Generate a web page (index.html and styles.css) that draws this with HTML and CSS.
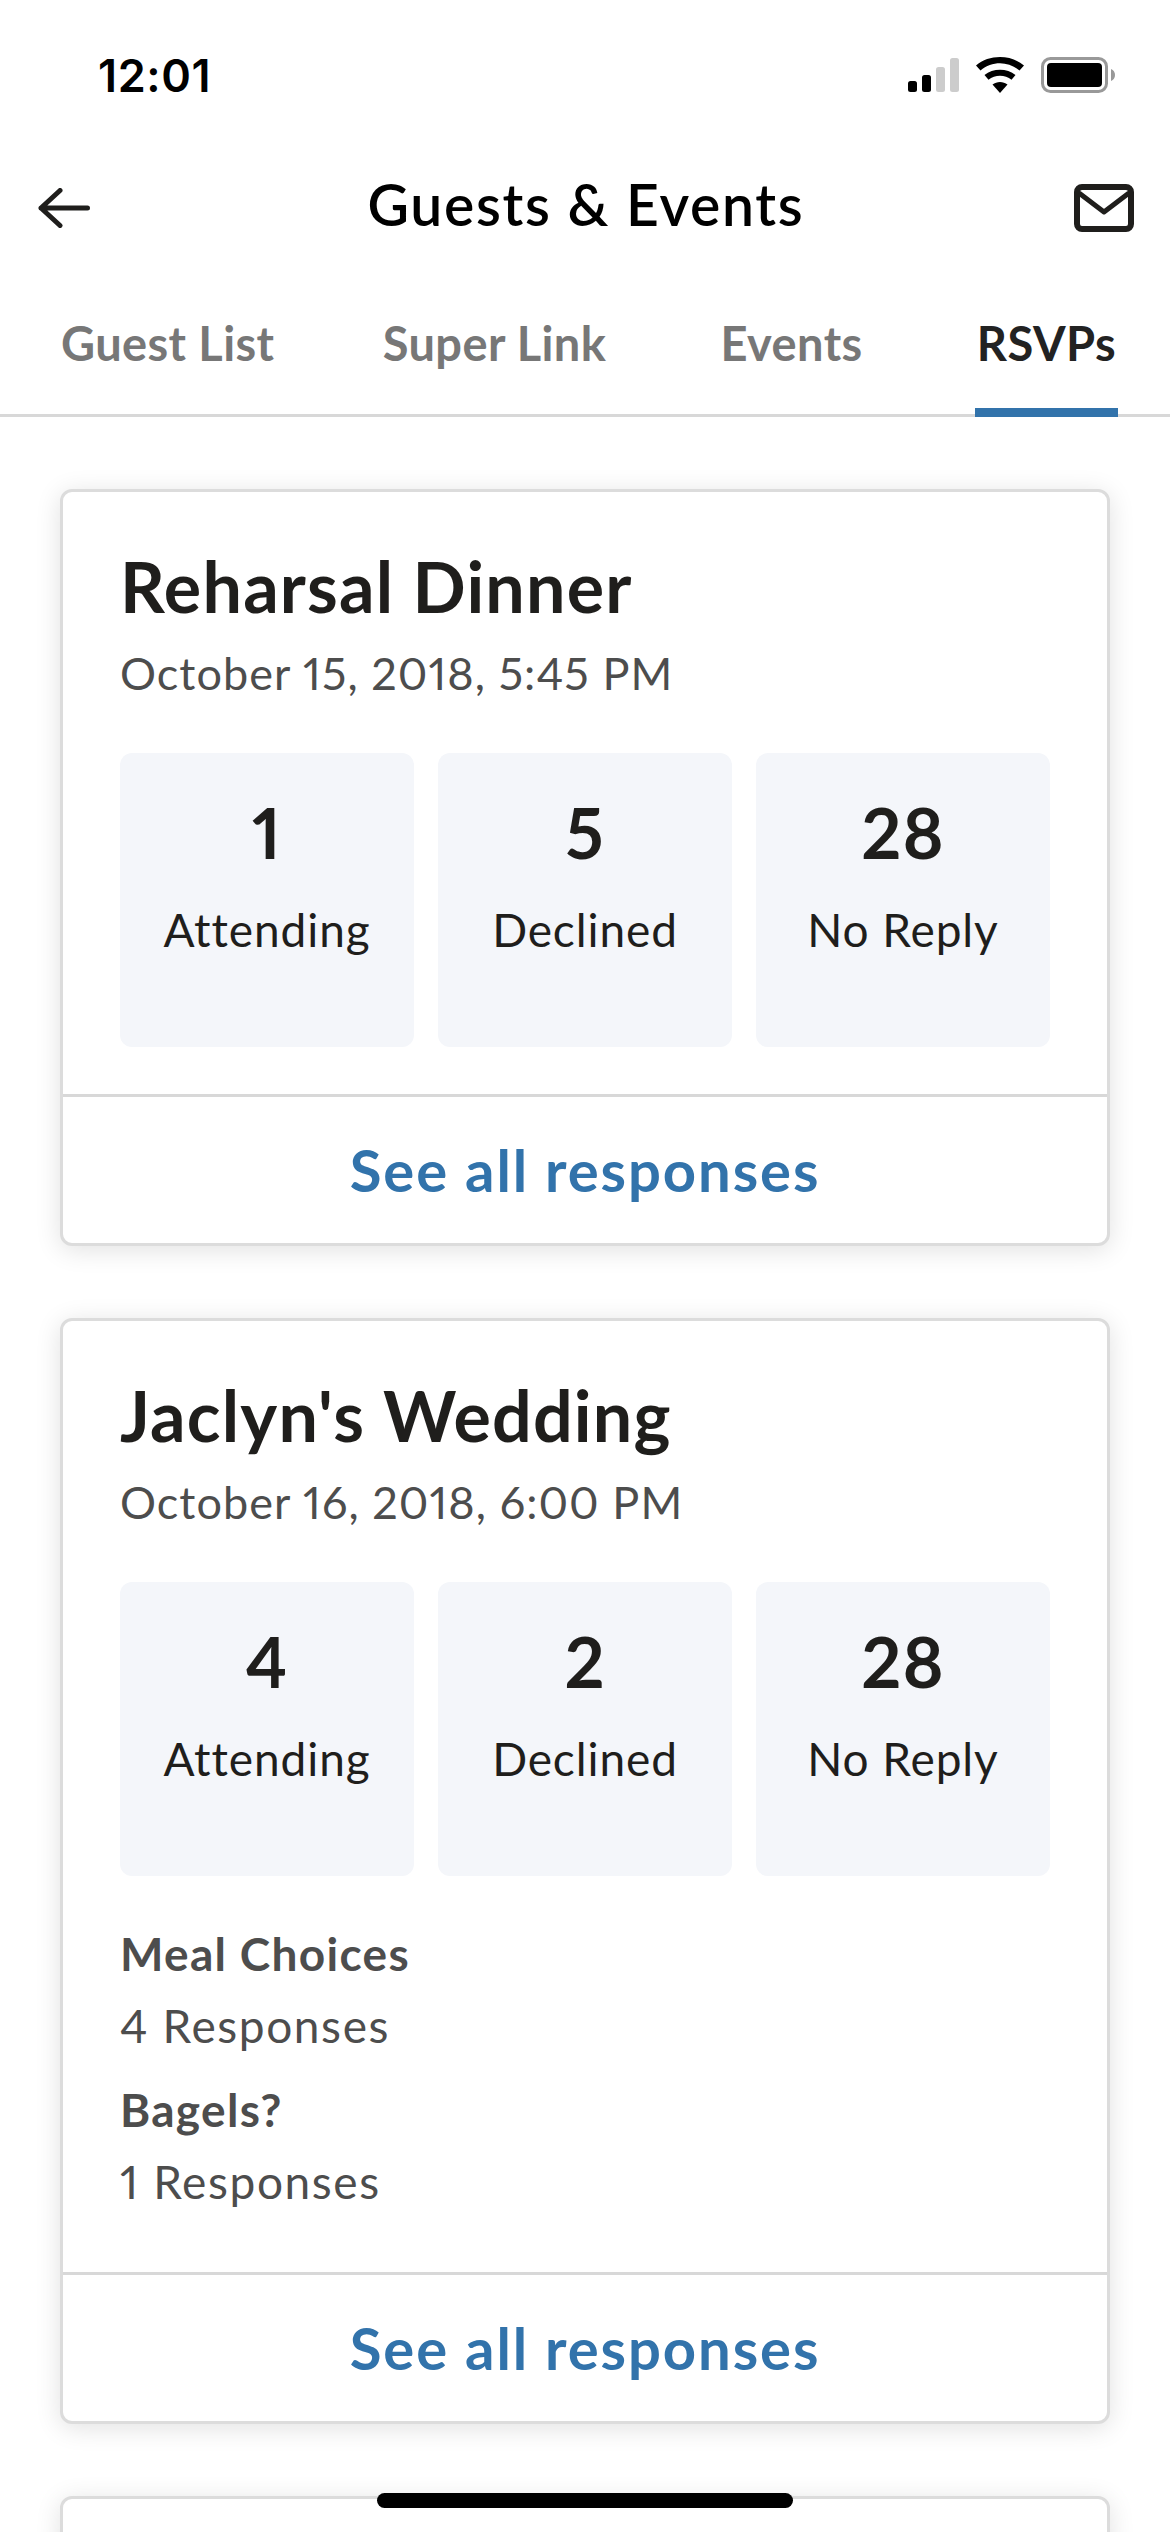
FILE: index.html
```html
<!DOCTYPE html>
<html lang="en">
<head>
    <meta charset="UTF-8">
    <meta name="viewport" content="width=device-width, initial-scale=1.0">
    <title>Guests &amp; Events</title>
    <link rel="stylesheet" href="styles.css">
</head>
<body>
    <div class="screen">
        <div class="status-bar">
            <span class="time">12:01</span>
            <div class="status-icons">
                <svg class="icon-signal" width="51" height="34" viewBox="0 0 51 34">
                    <rect x="0" y="23" width="9" height="11" rx="2.5" fill="#000"/>
                    <rect x="14" y="17" width="9" height="17" rx="2.5" fill="#000"/>
                    <rect x="28" y="9" width="9" height="25" rx="2.5" fill="#ccc"/>
                    <rect x="42" y="0" width="9" height="34" rx="2.5" fill="#ccc"/>
                </svg>
                <svg class="icon-wifi" width="48" height="36" viewBox="0 0 48 36">
                    <path d="M24 36 L16.500 27.500 C20.800 24 27.200 24 31.500 27.500 Z" fill="#000"/>
                    <path d="M12.500 22.800 L8.500 18 C16.800 11 31.200 11 39.500 18 L35.500 22.800 C29 17.500 19 17.500 12.500 22.800 Z" fill="#000"/>
                    <path d="M4.500 13.500 L0 8.500 C13 -2.800 35 -2.800 48 8.500 L43.500 13.500 C32 3.800 16 3.800 4.500 13.500 Z" fill="#000"/>
                </svg>
                <svg class="icon-battery" width="74" height="36" viewBox="0 0 74 36">
                    <rect x="1.500" y="1.500" width="64" height="33" rx="8" fill="none" stroke="#999" stroke-width="3"/>
                    <rect x="6" y="6" width="55" height="24" rx="4" fill="#000"/>
                    <path d="M70 12 C72.500 13 74 15 74 18 C74 21 72.500 23 70 24 Z" fill="#999"/>
                </svg>
            </div>
        </div>

        <div class="nav-bar">
            <svg class="icon-back" width="52" height="40" viewBox="0 0 52 40">
                <path d="M49.500 20 H3 M22 2.500 L3 20 L22 37.500" fill="none" stroke="#1f1e1c" stroke-width="5" stroke-linecap="round" stroke-linejoin="round"/>
            </svg>
            <h1>Guests &amp; Events</h1>
            <svg class="icon-mail" width="60" height="48" viewBox="0 0 60 48">
                <rect x="3" y="3" width="54" height="42" rx="5" fill="none" stroke="#1f1e1c" stroke-width="6"/>
                <path d="M5 9 L30 28 L55 9" fill="none" stroke="#1f1e1c" stroke-width="5" stroke-linejoin="round"/>
            </svg>
        </div>

        <div class="tabs">
            <a class="tab">Guest List</a>
            <a class="tab tab-second">Super Link</a>
            <a class="tab">Events</a>
            <a class="tab active">RSVPs</a>
        </div>

        <div class="content">
            <div class="card">
                <div class="card-body">
                    <h2>Reharsal Dinner</h2>
                    <p class="date">October 15, 2018, 5:45 PM</p>
                    <div class="stats">
                        <div class="stat"><strong>1</strong><span>Attending</span></div>
                        <div class="stat"><strong>5</strong><span>Declined</span></div>
                        <div class="stat"><strong>28</strong><span>No Reply</span></div>
                    </div>
                </div>
                <a class="card-link">See all responses</a>
            </div>

            <div class="card">
                <div class="card-body">
                    <h2>Jaclyn's Wedding</h2>
                    <p class="date">October 16, 2018, 6:00 PM</p>
                    <div class="stats">
                        <div class="stat"><strong>4</strong><span>Attending</span></div>
                        <div class="stat"><strong>2</strong><span>Declined</span></div>
                        <div class="stat"><strong>28</strong><span>No Reply</span></div>
                    </div>
                    <div class="questions">
                        <h3>Meal Choices</h3>
                        <p>4 Responses</p>
                        <h3>Bagels?</h3>
                        <p>1 Responses</p>
                    </div>
                </div>
                <a class="card-link">See all responses</a>
            </div>

            <div class="card card-next"></div>
        </div>

        <div class="home-bar"></div>
    </div>
</body>
</html>
```

FILE: styles.css
```css
body {
    font-family: Lato, "Open Sans", sans-serif;
    font-variant-numeric: proportional-nums;
    background-color: white;
    margin: 0;
    padding: 0;
}
.screen {
    position: relative;
    height: 2532px;
    overflow: hidden;
}
.status-bar {
    display: flex;
    justify-content: space-between;
    align-items: center;
    height: 150px;
    padding: 0 55px 0 98px;
    box-sizing: border-box;
}
.time {
    font-family: Inter, sans-serif;
    font-size: 45px;
    font-weight: 600;
    color: #000;
    letter-spacing: 0.6px;
}
.status-icons {
    display: flex;
    align-items: center;
    gap: 17px;
}
.nav-bar {
    display: grid;
    grid-template-columns: 1fr auto 1fr;
    align-items: center;
    height: 110px;
    padding: 6px 36px 0 38px;
    box-sizing: border-box;
}
.icon-mail {
    justify-self: end;
}
h1 {
    font-size: 57px;
    font-weight: 600;
    letter-spacing: 1.7px;
    color: #000;
    margin: -9px 0 0;
}
.tabs {
    display: flex;
    justify-content: space-between;
    height: 157px;
    padding: 0 52px 0 59px;
    border-bottom: 3px solid #d8d8d8;
    box-sizing: border-box;
}
.tab {
    font-size: 47px;
    font-weight: 700;
    letter-spacing: 0.4px;
    color: #777;
    padding: 55px 2px 0;
    height: 157px;
    box-sizing: border-box;
}
.tab-second {
    margin-left: -6px;
}
.tab.active {
    color: #222;
    border-bottom: 9px solid #3273ab;
}
.content {
    padding: 72px 60px 0;
}
.card {
    background-color: white;
    border: 3px solid #dcdcdc;
    border-radius: 12px;
    box-shadow: 0 4px 26px rgba(0, 0, 0, 0.12);
    margin-bottom: 72px;
}
.card-next {
    height: 300px;
}
.card-body {
    padding: 54px 57px 47px;
}
h2 {
    font-size: 70px;
    font-weight: 700;
    line-height: 80px;
    letter-spacing: 1.2px;
    color: #1f1e1c;
    margin: 0;
}
.date {
    font-size: 45px;
    line-height: 56px;
    letter-spacing: 1.05px;
    color: #4d4d4d;
    margin: 19px 0 0;
}
.stats {
    display: grid;
    grid-template-columns: repeat(3, 1fr);
    gap: 24px;
    margin-top: 52px;
}
.stat {
    display: flex;
    flex-direction: column;
    align-items: center;
    height: 294px;
    background-color: #f4f6fa;
    border-radius: 12px;
    color: #1f1e1c;
}
.stat strong {
    font-size: 70px;
    font-weight: 700;
    line-height: 80px;
    letter-spacing: 1px;
    margin-top: 39px;
}
.stat span {
    font-size: 46px;
    line-height: 56px;
    letter-spacing: 0.9px;
    margin-top: 30px;
}
.questions {
    margin-top: 50px;
    margin-bottom: 15px;
    color: #4d4d4d;
}
.questions h3 {
    font-size: 46px;
    font-weight: 700;
    line-height: 56px;
    letter-spacing: 1.3px;
    margin: 0;
}
.questions p {
    font-size: 46px;
    line-height: 56px;
    letter-spacing: 1.6px;
    margin: 16px 0 0;
}
.questions p + h3 {
    margin-top: 28px;
}
.card-link {
    display: block;
    border-top: 3px solid #d8d8d8;
    height: 146px;
    line-height: 146px;
    text-align: center;
    font-size: 58px;
    font-weight: 700;
    letter-spacing: 1.9px;
    color: #3273ab;
}
.home-bar {
    position: absolute;
    left: 377px;
    bottom: 24px;
    width: 416px;
    height: 15px;
    border-radius: 8px;
    background-color: #000;
}
```
